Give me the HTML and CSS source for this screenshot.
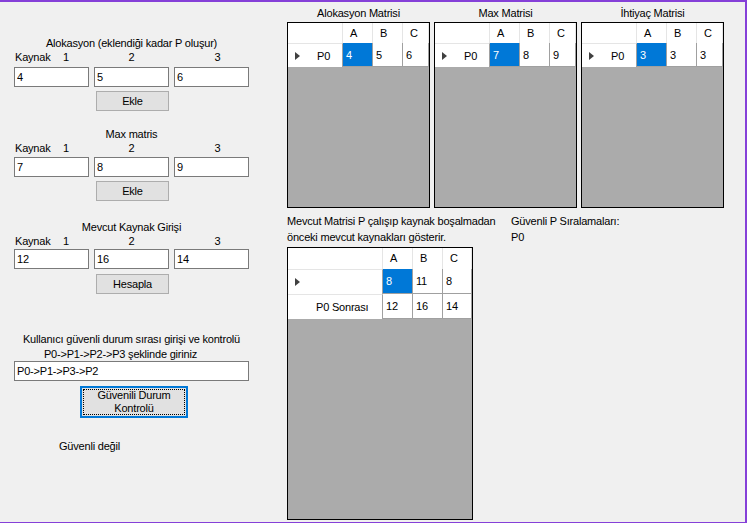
FILE: index.html
```html
<!DOCTYPE html>
<html lang="tr">
<head>
<meta charset="utf-8">
<title>Banker</title>
<link rel="stylesheet" href="styles.css">
</head>
<body>
<div class="window">
  <div class="left">
    <div class="form">
      <div class="line t1 center">Alokasyon (eklendiği kadar P oluşur)</div>
      <div class="krow m1"><span class="kc1"><span class="kword">Kaynak</span>1</span><span class="kc2">2</span><span class="kc3">3</span></div>
      <div class="boxes m3"><input class="tb" value="4"><input class="tb" value="5"><input class="tb" value="6"></div>
      <button class="btn m4">Ekle</button>

      <div class="line t2 center">Max matris</div>
      <div class="krow m1"><span class="kc1"><span class="kword">Kaynak</span>1</span><span class="kc2">2</span><span class="kc3">3</span></div>
      <div class="boxes m2"><input class="tb" value="7"><input class="tb" value="8"><input class="tb" value="9"></div>
      <button class="btn m4">Ekle</button>

      <div class="line t3 center">Mevcut Kaynak Girişi</div>
      <div class="krow m1"><span class="kc1"><span class="kword">Kaynak</span>1</span><span class="kc2">2</span><span class="kc3">3</span></div>
      <div class="boxes m1"><input class="tb" value="12"><input class="tb" value="16"><input class="tb" value="14"></div>
      <button class="btn m5">Hesapla</button>

      <div class="line t4 center">Kullanıcı güvenli durum sırası girişi ve kontrolü</div>
      <div class="line m2 center shift">P0-&gt;P1-&gt;P2-&gt;P3 şeklinde giriniz</div>
      <input class="tb wide m3" value="P0-&gt;P1-&gt;P3-&gt;P2">
      <button class="btn focus m5">Güvenili Durum<br>Kontrolü</button>
      <div class="line result">Güvenli değil</div>
    </div>
  </div>

  <div class="right">
    <div class="grids">
      <div class="gwrap">
        <div class="line center gtitle">Alokasyon Matrisi</div>
        <div class="dgv small">
          <div class="hc"></div><div class="hc">A</div><div class="hc">B</div><div class="hc">C</div>
          <div class="rh"><span class="tri"></span>P0</div><div class="dc sel">4</div><div class="dc">5</div><div class="dc">6</div>
        </div>
      </div>
      <div class="gwrap">
        <div class="line center gtitle">Max Matrisi</div>
        <div class="dgv small">
          <div class="hc"></div><div class="hc">A</div><div class="hc">B</div><div class="hc">C</div>
          <div class="rh"><span class="tri"></span>P0</div><div class="dc sel">7</div><div class="dc">8</div><div class="dc">9</div>
        </div>
      </div>
      <div class="gwrap">
        <div class="line center gtitle">İhtiyaç Matrisi</div>
        <div class="dgv small">
          <div class="hc"></div><div class="hc">A</div><div class="hc">B</div><div class="hc">C</div>
          <div class="rh"><span class="tri"></span>P0</div><div class="dc sel">3</div><div class="dc">3</div><div class="dc">3</div>
        </div>
      </div>
    </div>

    <div class="notes">
      <div class="note1">
        <div class="nline">Mevcut Matrisi P çalışıp kaynak boşalmadan</div>
        <div class="nline">önceki mevcut kaynakları gösterir.</div>
      </div>
      <div class="note2">
        <div class="nline">Güvenli P Sıralamaları:</div>
        <div class="nline">P0</div>
      </div>
    </div>

    <div class="dgv big">
      <div class="hc"></div><div class="hc">A</div><div class="hc">B</div><div class="hc">C</div>
      <div class="rh"><span class="tri"></span></div><div class="dc sel">8</div><div class="dc">11</div><div class="dc">8</div>
      <div class="rh plain">P0 Sonrası</div><div class="dc">12</div><div class="dc">16</div><div class="dc">14</div>
    </div>
  </div>
</div>
</body>
</html>
```

FILE: styles.css
```css
html, body {
  margin: 0;
  padding: 0;
  background: #f0f0f0;
}

.window {
  width: 747px;
  height: 523px;
  box-sizing: border-box;
  border-top: 2px solid #8540d8;
  border-right: 2px solid #8540d8;
  border-bottom: 1px solid #8540d8;
  background: #f0f0f0;
  display: flex;
  font-family: "Liberation Sans", Arial, sans-serif;
  font-size: 11px;
  letter-spacing: -0.2px;
  color: #000;
  overflow: hidden;
}

.left {
  width: 287px;
  flex: none;
  box-sizing: border-box;
  padding-left: 14px;
}

.form {
  width: 235px;
  display: flex;
  flex-direction: column;
  align-items: flex-start;
}

.line {
  height: 13px;
  line-height: 13px;
  white-space: nowrap;
}

.center {
  align-self: stretch;
  text-align: center;
}

.shift { padding-right: 22px; }

.t1 { margin-top: 35px; }
.t2 { margin-top: 17px; }
.t3 { margin-top: 20px; }
.t4 { margin-top: 39px; }
.m1 { margin-top: 1px; }
.m2 { margin-top: 2px; }
.m3 { margin-top: 3px; }
.m4 { margin-top: 4px; }
.m5 { margin-top: 5px; }

.krow {
  align-self: stretch;
  display: grid;
  grid-template-columns: 75px 75px 75px;
  column-gap: 5px;
  height: 13px;
  line-height: 13px;
}

.kc1 { padding-left: 1px; display: flex; }
.kword { width: 48px; }
.kc2 { text-align: center; }
.kc3 { text-align: center; padding-left: 12px; }

.boxes {
  display: grid;
  grid-template-columns: 75px 75px 75px;
  column-gap: 5px;
}

.tb {
  width: 75px;
  height: 20px;
  box-sizing: border-box;
  border: 1px solid #7a7a7a;
  background: #fff;
  padding: 0 0 0 2px;
  margin: 0;
  font-family: inherit;
  font-size: 11px;
  letter-spacing: -0.2px;
  color: #000;
  outline: none;
}

.tb.wide {
  width: 235px;
}

.btn {
  display: block;
  width: 73px;
  height: 20px;
  margin-left: 82px;
  box-sizing: border-box;
  border: 1px solid #adadad;
  background: #e1e1e1;
  font-family: inherit;
  font-size: 11px;
  letter-spacing: -0.2px;
  line-height: 13px;
  color: #000;
  padding: 0;
}

.btn.focus {
  width: 108px;
  height: 32px;
  margin-left: 66px;
  border: 2px solid #0078d7;
  outline: 1px dotted #000;
  outline-offset: -4px;
}

.result {
  margin-top: 22px;
  margin-left: 45px;
}

.right {
  flex: none;
  width: 440px;
  display: flex;
  flex-direction: column;
}

.grids {
  display: flex;
  gap: 4px;
  margin-top: 5px;
}

.gwrap {
  width: 143px;
  display: flex;
  flex-direction: column;
}

.gtitle { margin-bottom: 2px; }

.dgv {
  box-sizing: border-box;
  border: 1px solid #000;
  background: #ababab;
  display: grid;
  align-content: start;
}

.dgv.small {
  height: 186px;
  grid-template-columns: 55px 30px 30px 1fr;
  grid-template-rows: 20px 24px;
}

.dgv.big {
  width: 186px;
  height: 273px;
  margin-top: 2px;
  grid-template-columns: 95px 30px 30px 1fr;
  grid-template-rows: 21px 25px 25px;
}

.hc {
  background: #fff;
  border-right: 1px solid #e5e5e5;
  padding-left: 7px;
  line-height: 20px;
  box-sizing: border-box;
}

.rh {
  background: #fff;
  border-right: 1px solid #a0a0a0;
  border-top: 1px solid #e5e5e5;
  box-sizing: border-box;
  display: flex;
  align-items: center;
  padding-left: 7px;
}

.rh.plain { padding-left: 28px; }

.tri {
  width: 0;
  height: 0;
  border-left: 5px solid #404040;
  border-top: 4.5px solid transparent;
  border-bottom: 4.5px solid transparent;
  margin-right: 17px;
}

.dc {
  background: #fff;
  border-right: 1px solid #a0a0a0;
  border-bottom: 1px solid #a0a0a0;
  box-sizing: border-box;
  padding-left: 3px;
  display: flex;
  align-items: center;
}

.dc.sel {
  background: #0078d7;
  color: #fff;
}

.notes {
  display: flex;
  margin-top: 5px;
}

.note1 { width: 224px; }

.nline {
  height: 16px;
  line-height: 16px;
  white-space: nowrap;
}
```
